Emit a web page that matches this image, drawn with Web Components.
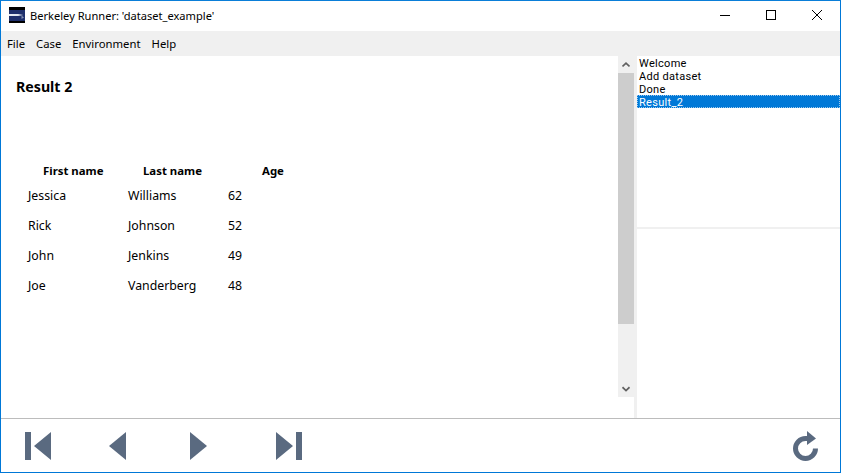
<!DOCTYPE html>
<html>
<head>
<meta charset="utf-8">
<title>Berkeley Runner</title>
<style>
html, body { margin: 0; padding: 0; height: 100%; background: #fff; overflow: hidden; }
body { font-family: "Noto Sans", "Open Sans", sans-serif; font-size: 12px; color: #000; }
</style>
</head>
<body>
<app-window>
  <title-bar slot="title">Berkeley Runner: 'dataset_example'</title-bar>
  <menu-bar slot="menu">
    <span>File</span><span>Case</span><span>Environment</span><span>Help</span>
  </menu-bar>
  <result-view slot="content" heading="Result 2"></result-view>
  <v-scrollbar slot="scroll"></v-scrollbar>
  <case-list slot="side"></case-list>
  <nav-toolbar slot="toolbar"></nav-toolbar>
</app-window>

<script>
class AppWindow extends HTMLElement {
  constructor() {
    super();
    this.attachShadow({ mode: 'open' }).innerHTML = `<style>
:host { display: flex; flex-direction: column; box-sizing: border-box; width: 841px; height: 473px; border: 1px solid #0078d7; border-top-color: #0a7ed8; background: #fff; }
.main { flex: 1; display: flex; min-height: 0; }
.content { flex: 1; min-width: 0; display: flex; }
.scroll { width: 16px; display: flex; flex-direction: column; }
.gap { width: 3px; background: #f0f0f0; }
.side { width: 203px; display: flex; }
</style>
<slot name="title"></slot>
<slot name="menu"></slot>
<div class="main">
  <div class="content"><slot name="content"></slot></div>
  <div class="scroll"><slot name="scroll"></slot></div>
  <div class="gap"></div>
  <div class="side"><slot name="side"></slot></div>
</div>
<slot name="toolbar"></slot>`;
  }
}

class TitleBar extends HTMLElement {
  constructor() {
    super();
    this.attachShadow({ mode: 'open' }).innerHTML = `<style>
:host { display: flex; align-items: center; height: 30px; flex: none; background: #fff; font-size: 11.1px; }
.logo { width: 16px; height: 16px; margin: 0 5px 2px 8px; flex: none; }
.text { flex: 1; padding-bottom: 1px; white-space: nowrap; }
.btn { width: 46px; height: 30px; padding-bottom: 2px; box-sizing: border-box; display: flex; align-items: center; justify-content: center; flex: none; }
.btn svg { display: block; }
</style>
<svg class="logo" viewBox="0 0 16 16">
  <defs><linearGradient id="streak" x1="0" x2="1" y1="0" y2="0">
    <stop offset="0" stop-color="#e8ecf4"/><stop offset=".65" stop-color="#dfe4ee"/><stop offset="1" stop-color="#2a3a72"/>
  </linearGradient></defs>
  <rect width="16" height="16" fill="#000"/>
  <rect y="3" width="16" height="11" fill="#1e2f6b"/>
  <rect y="7" width="14" height="2" fill="url(#streak)"/>
  <path d="M12.5 8.5L15 10.5L12.5 12Z" fill="#7f8db0"/>
</svg>
<span class="text"><slot></slot></span>
<div class="btn"><svg width="10" height="10"><path d="M0 5.5H10" stroke="#000"/></svg></div>
<div class="btn"><svg width="10" height="10"><rect x=".5" y=".5" width="9" height="9" fill="none" stroke="#000"/></svg></div>
<div class="btn"><svg width="10" height="10"><path d="M0 0L10 10M10 0L0 10" stroke="#000"/></svg></div>`;
  }
}

class MenuBar extends HTMLElement {
  constructor() {
    super();
    this.attachShadow({ mode: 'open' }).innerHTML = `<style>
:host { display: flex; align-items: center; gap: 11px; height: 25px; flex: none; padding-left: 6px; background: #f0f0f0; font-size: 11.3px; }
::slotted(span) { display: block; }
</style><slot></slot>`;
  }
}

const rows = [
  ['Jessica', 'Williams', '62'],
  ['Rick', 'Johnson', '52'],
  ['John', 'Jenkins', '49'],
  ['Joe', 'Vanderberg', '48']
];

class ResultView extends HTMLElement {
  constructor() {
    super();
    const body = rows.map(r => `<div class="row"><span>${r[0]}</span><span>${r[1]}</span><span>${r[2]}</span></div>`).join('');
    this.attachShadow({ mode: 'open' }).innerHTML = `<style>
:host { display: block; flex: 1; padding: 21px 0 0 15px; font-size: 12.3px; }
h1 { margin: 0 0 65px; font-size: 14.2px; line-height: 20px; font-weight: 700; }
.head { display: grid; grid-template-columns: 100px 119px 60px; height: 19px; line-height: 18px; font-weight: 700; font-size: 11.4px; padding-left: 27px; }
.row { display: grid; grid-template-columns: 100px 100px 40px; height: 30px; line-height: 30px; padding-left: 12px; }
</style>
<h1>${this.getAttribute('heading')}</h1>
<div class="head"><span>First name</span><span>Last name</span><span>Age</span></div>
${body}`;
  }
}

class VScrollbar extends HTMLElement {
  constructor() {
    super();
    this.attachShadow({ mode: 'open' }).innerHTML = `<style>
:host { display: flex; flex-direction: column; height: 341px; width: 16px; flex: none; background: #f0f0f0; }
.arrow { height: 17px; display: flex; align-items: center; justify-content: center; flex: none; }
.thumb { height: 251px; background: #cdcdcd; flex: none; }
.rest { flex: 1; }
</style>
<div class="arrow"><svg width="8" height="6"><path d="M.5 4.5L4 1.2L7.5 4.5" fill="none" stroke="#606060" stroke-width="1.7"/></svg></div>
<div class="thumb"></div>
<div class="rest"></div>
<div class="arrow"><svg width="8" height="6"><path d="M.5 1.2L4 4.5L7.5 1.2" fill="none" stroke="#606060" stroke-width="1.7"/></svg></div>`;
  }
}

class CaseList extends HTMLElement {
  constructor() {
    super();
    this.attachShadow({ mode: 'open' }).innerHTML = `<style>
:host { display: flex; flex-direction: column; flex: 1; font-family: Roboto, sans-serif; font-size: 11px; letter-spacing: .3px; }
.list { height: 171px; flex: none; border-bottom: 2px solid #f0f0f0; }
.item { height: 13px; line-height: 15px; padding-left: 2px; white-space: nowrap; overflow: hidden; }
.sel { background: #0078d7; color: #fff; outline: 1px dotted #9cc8ec; outline-offset: -1px; }
.rest { flex: 1; }
</style>
<div class="list">
  <div class="item">Welcome</div>
  <div class="item">Add dataset</div>
  <div class="item">Done</div>
  <div class="item sel">Result_2</div>
</div>
<div class="rest"></div>`;
  }
}

class NavToolbar extends HTMLElement {
  constructor() {
    super();
    const c = '#5a6a80';
    this.attachShadow({ mode: 'open' }).innerHTML = `<style>
:host { display: flex; align-items: center; height: 54px; flex: none; box-sizing: border-box; border-top: 1px solid #bcbcbc; background: #fff; }
svg { display: block; flex: none; }
.first { margin-left: 24px; }
.prev { margin-left: 58px; }
.next { margin-left: 64px; }
.last { margin-left: 69px; }
.reload { margin-left: auto; margin-right: 21px; }
</style>
<svg class="first" width="26" height="28" viewBox="0 0 26 28"><path d="M0 0H6V28H0Z M26 0V28L9 14Z" fill="${c}"/></svg>
<svg class="prev" width="17" height="28" viewBox="0 0 17 28"><path d="M17 0V28L0 14Z" fill="${c}"/></svg>
<svg class="next" width="17" height="28" viewBox="0 0 17 28"><path d="M0 0V28L17 14Z" fill="${c}"/></svg>
<svg class="last" width="26" height="28" viewBox="0 0 26 28"><path d="M20 0H26V28H20Z M0 0V28L17 14Z" fill="${c}"/></svg>
<svg class="reload" width="26" height="30" viewBox="0 0 26 30"><path d="M22.5 17.5A10 10 0 1 1 12.5 7.5H15" fill="none" stroke="${c}" stroke-width="5"/><path d="M14 0L23 7.5L14 14Z" fill="${c}"/></svg>`;
  }
}

customElements.define('app-window', AppWindow);
customElements.define('title-bar', TitleBar);
customElements.define('menu-bar', MenuBar);
customElements.define('result-view', ResultView);
customElements.define('v-scrollbar', VScrollbar);
customElements.define('case-list', CaseList);
customElements.define('nav-toolbar', NavToolbar);
</script>
</body>
</html>
